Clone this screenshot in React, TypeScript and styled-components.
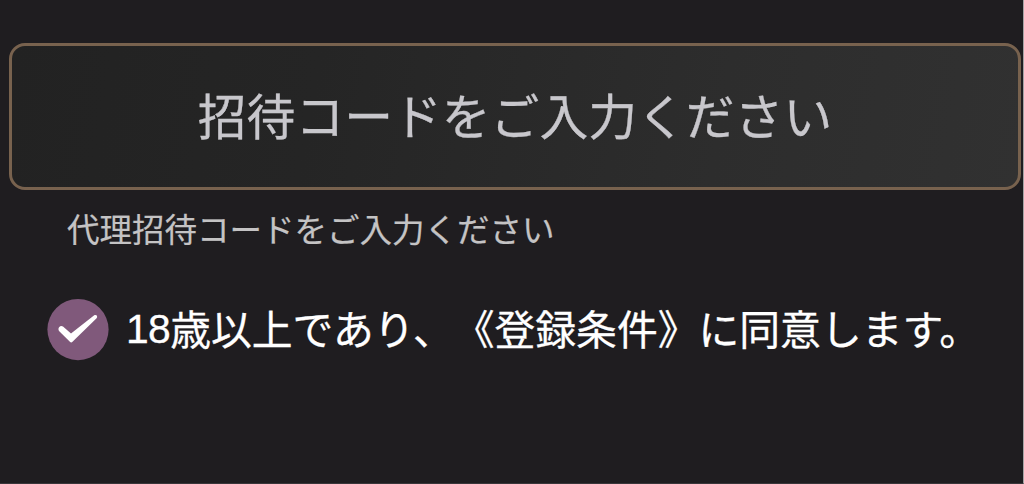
import React from "react";
import styled, {createGlobalStyle} from "styled-components";

const GlobalStyle = createGlobalStyle`
  body {
    margin: 0;
    background: #1f1d20;
  }
`;

const Page = styled.main`
  box-sizing: border-box;
  height: 484px;
  padding: 43px 2px 0 9px;
  overflow: hidden;
  background: #1f1d20;
  border-right: 1px solid #a5a4a5;
  border-bottom: 1px solid #38363a;
  font-family: "Liberation Sans", "Noto Sans CJK JP", sans-serif;
  text-spacing-trim: space-all;
  white-space: nowrap;
`;

const CodeField = styled.div`
  box-sizing: border-box;
  display: flex;
  align-items: center;
  justify-content: center;
  height: 147px;
  padding-top: 3px;
  border: 3px solid #78624e;
  border-radius: 16px;
  background: linear-gradient(100deg, #222222, #252525 30%, #2d2d2d 70%, #313131);
  color: #c8c7cc;
  font-size: 48.8px;
  line-height: 70px;
  -webkit-text-stroke: 0.3px #c8c7cc;
`;

const Hint = styled.p`
  margin: 17px 0 0 58px;
  color: #c4c3c4;
  font-size: 32.5px;
  line-height: 48px;
  -webkit-text-stroke: 0.2px #c4c3c4;
`;

const Agreement = styled.label`
  display: flex;
  align-items: center;
  gap: 17px;
  height: 62px;
  margin: 44px 0 0 38px;
  color: #ffffff;
  font-size: 40.8px;
  line-height: 60px;
  -webkit-text-stroke: 0.3px #ffffff;
`;

const AgreementText = styled.span`
  padding-top: 2px;
`;

const Age = styled.span`
  line-height: 1;
  letter-spacing: -0.6px;
  vertical-align: 2px;
`;

const CheckCircle = styled.svg`
  flex: none;
  width: 62px;
  height: 62px;
`;

const App = () => {
    return <>
        <GlobalStyle />
        <Page lang="ja">
            <CodeField>招待コードをご入力ください</CodeField>
            <Hint>代理招待コードをご入力ください</Hint>
            <Agreement>
                <CheckCircle viewBox="0 0 62 62" aria-hidden="true">
                    <circle cx="31" cy="30.6" r="30.6" fill="#80597b" />
                    <path
                        d="M12.3 28C13.3 26.8 14.8 26.7 16 27.6L24 34.5L46.9 16.4C49.2 14.8 51.2 17.2 49.6 19.2L25.5 42.8Q24.2 44 22.9 42.8L12.5 32.6Q10.5 30.2 12.3 28Z"
                        fill="#ffffff"
                    />
                </CheckCircle>
                <AgreementText><Age>18</Age>歳以上であり、《登録条件》に同意します。</AgreementText>
            </Agreement>
        </Page>
    </>
}

export default App;
